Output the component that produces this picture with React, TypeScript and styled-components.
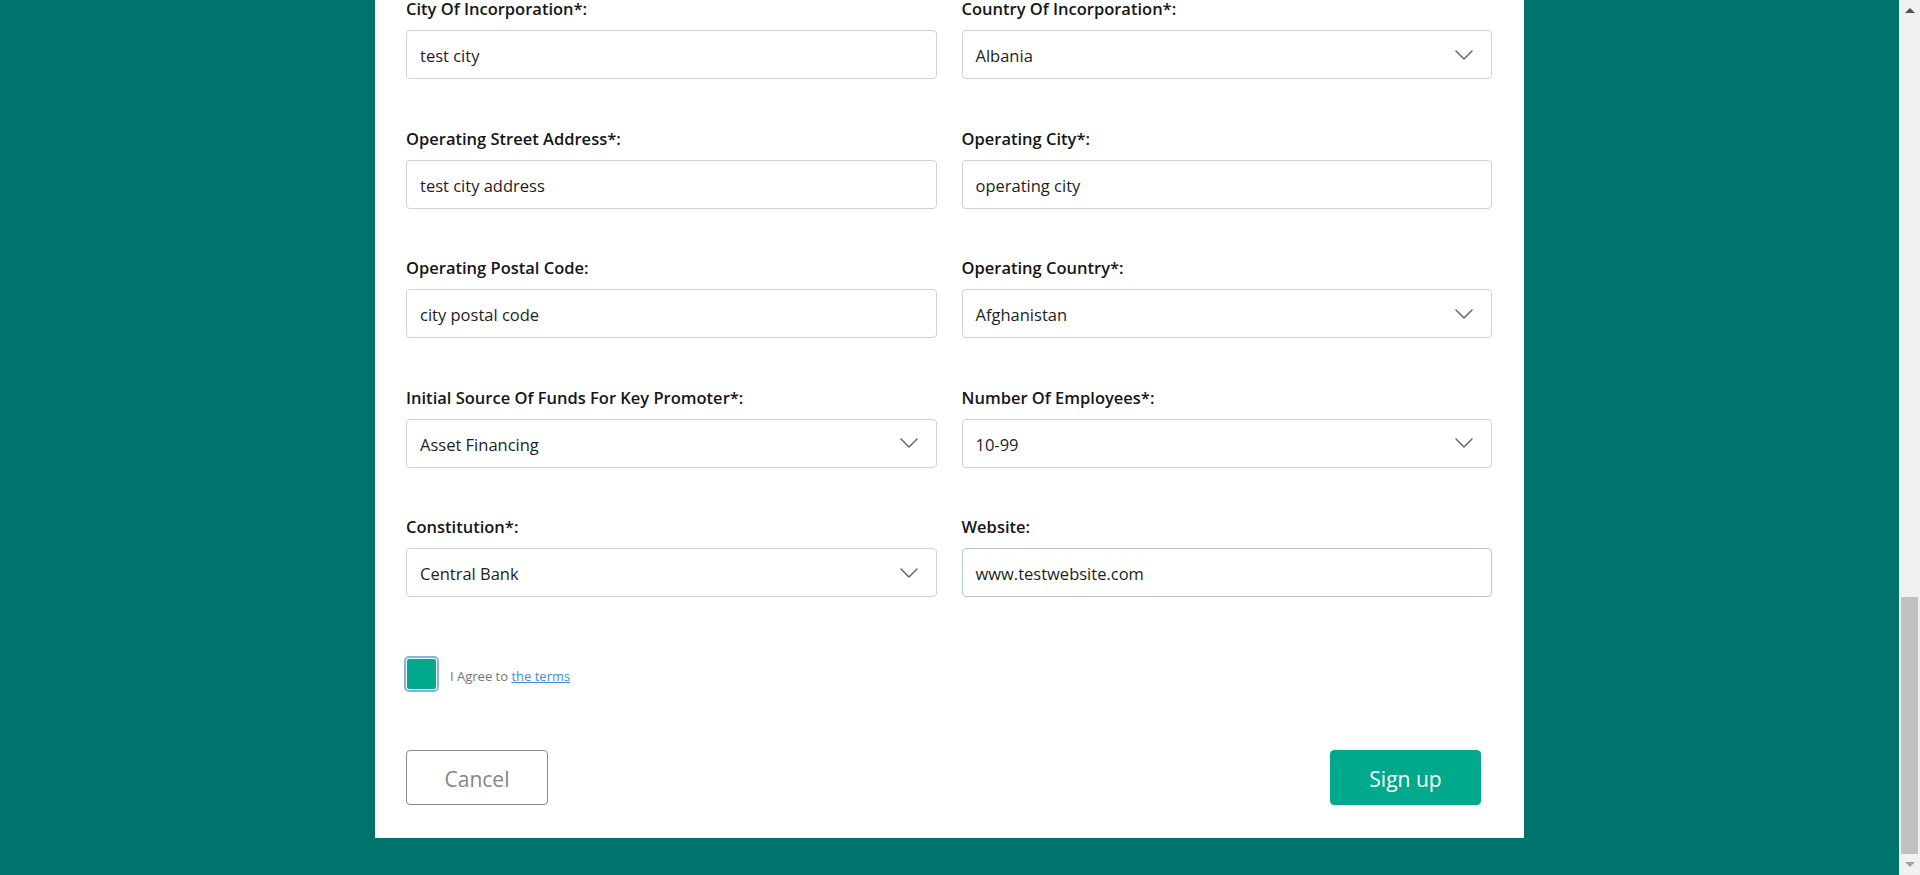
import React from "react";
import styled, { createGlobalStyle } from "styled-components";

const GlobalStyle = createGlobalStyle`
  html, body {
    margin: 0;
    padding: 0;
    height: 100%;
    overflow: hidden;
    background: #00736c;
  }
  body {
    font-family: "Open Sans", "Noto Sans", "Liberation Sans", sans-serif;
  }
  * { box-sizing: border-box; }
`;

const Screen = styled.div`
  display: flex;
  height: 875px;
  width: 100%;
  background: #00736c;
`;

const Viewport = styled.div`
  flex: 1;
  display: flex;
  flex-direction: column;
  align-items: center;
  justify-content: flex-end;
  overflow: hidden;
  padding-bottom: 37px;
`;

const Panel = styled.section`
  flex-shrink: 0;
  width: 1149px;
  background: #ffffff;
  padding: 0 32px 33px 31px;
`;

const FieldGrid = styled.div`
  display: grid;
  grid-template-columns: 1fr 1fr;
  column-gap: 25px;
  row-gap: 50.5px;
`;

const FieldGroup = styled.div`
  display: flex;
  flex-direction: column;
`;

const Label = styled.label`
  font-size: 16.5px;
  font-weight: 600;
  line-height: 18px;
  color: #161616;
  margin-bottom: 12px;
  white-space: nowrap;
`;

const Control = styled.div<{ $tone?: "plain" | "accent" }>`
  height: 49px;
  display: flex;
  align-items: center;
  justify-content: space-between;
  padding: 0 18px 0 13px;
  border: 1px solid ${(p) => (p.$tone === "accent" ? "#b7cac7" : "#d2d2d2")};
  border-radius: 4px;
  background: #fff;
  font-size: 16.5px;
  color: #1e1e1e;
`;

const Value = styled.span`
  white-space: nowrap;
  padding-top: 2px;
`;

const Chevron = styled.svg`
  width: 18px;
  height: 10px;
  flex-shrink: 0;
`;

const CheckRow = styled.div`
  margin-top: 61px;
  display: flex;
  align-items: center;
  gap: 13px;
`;

const CheckBox = styled.span`
  width: 31px;
  height: 32px;
  border-radius: 3px;
  background: #00a98b;
  border: 1px solid #ffffff;
  outline: 2px solid #7fb6dd;
  flex-shrink: 0;
`;

const CheckText = styled.span`
  font-size: 13px;
  color: #747474;
  padding-top: 3px;
`;

const TermsLink = styled.a`
  color: #3f8fdc;
  text-decoration: underline;
  cursor: pointer;
`;

const ButtonRow = styled.div`
  margin-top: 60px;
  display: flex;
  justify-content: space-between;
  padding-right: 11px;
`;

const Button = styled.button<{ $primary?: boolean }>`
  height: 55px;
  width: ${(p) => (p.$primary ? "151px" : "142px")};
  border-radius: 4px;
  font-family: "Open Sans", "Noto Sans", sans-serif;
  font-size: 21px;
  padding-top: 3px;
  cursor: pointer;
  border: 1px solid ${(p) => (p.$primary ? "#00a98b" : "#8a8a8a")};
  background: ${(p) => (p.$primary ? "#00a98b" : "#ffffff")};
  color: ${(p) => (p.$primary ? "#ffffff" : "#858585")};
`;

const Scrollbar = styled.div`
  width: 21px;
  flex-shrink: 0;
  background: #f1f1f1;
  display: flex;
  flex-direction: column;
`;

const ScrollArrow = styled.div<{ $dir: "up" | "down"; $disabled?: boolean }>`
  height: 21px;
  display: flex;
  align-items: center;
  justify-content: center;
  &::before {
    content: "";
    width: 0;
    height: 0;
    border-left: 5px solid transparent;
    border-right: 5px solid transparent;
    ${(p) =>
      p.$dir === "up"
        ? `border-bottom: 5px solid ${p.$disabled ? "#a3a3a3" : "#505050"};`
        : `border-top: 5px solid ${p.$disabled ? "#a3a3a3" : "#505050"};`}
  }
`;

const Track = styled.div`
  flex: 1;
  display: flex;
  flex-direction: column;
  justify-content: flex-end;
`;

const Thumb = styled.div`
  height: 257px;
  margin: 0 2px;
  background: #c1c1c1;
`;

type Field = {
  label: string;
  value: string;
  select?: boolean;
  tone?: "plain" | "accent";
};

const fields: Field[] = [
  { label: "City Of Incorporation*:", value: "test city" },
  { label: "Country Of Incorporation*:", value: "Albania", select: true },
  { label: "Operating Street Address*:", value: "test city address" },
  { label: "Operating City*:", value: "operating city" },
  { label: "Operating Postal Code:", value: "city postal code" },
  { label: "Operating Country*:", value: "Afghanistan", select: true },
  {
    label: "Initial Source Of Funds For Key Promoter*:",
    value: "Asset Financing",
    select: true,
  },
  { label: "Number Of Employees*:", value: "10-99", select: true },
  { label: "Constitution*:", value: "Central Bank", select: true },
  { label: "Website:", value: "www.testwebsite.com", tone: "accent" },
];

function ChevronDown() {
  return (
    <Chevron viewBox="0 0 18 10" aria-hidden="true">
      <polyline
        points="1,1 9,9 17,1"
        fill="none"
        stroke="#666"
        strokeWidth="1.5"
        strokeLinecap="round"
        strokeLinejoin="round"
      />
    </Chevron>
  );
}

export default function App() {
  return (
    <>
      <GlobalStyle />
      <Screen>
        <Viewport>
          <Panel>
            <FieldGrid>
              {fields.map((f) => (
                <FieldGroup key={f.label}>
                  <Label>{f.label}</Label>
                  <Control $tone={f.tone}>
                    <Value>{f.value}</Value>
                    {f.select && <ChevronDown />}
                  </Control>
                </FieldGroup>
              ))}
            </FieldGrid>
            <CheckRow>
              <CheckBox role="checkbox" aria-checked="true" />
              <CheckText>
                I Agree to <TermsLink>the terms</TermsLink>
              </CheckText>
            </CheckRow>
            <ButtonRow>
              <Button type="button">Cancel</Button>
              <Button type="button" $primary>
                Sign up
              </Button>
            </ButtonRow>
          </Panel>
        </Viewport>
        <Scrollbar>
          <ScrollArrow $dir="up" />
          <Track>
            <Thumb />
          </Track>
          <ScrollArrow $dir="down" $disabled />
        </Scrollbar>
      </Screen>
    </>
  );
}
